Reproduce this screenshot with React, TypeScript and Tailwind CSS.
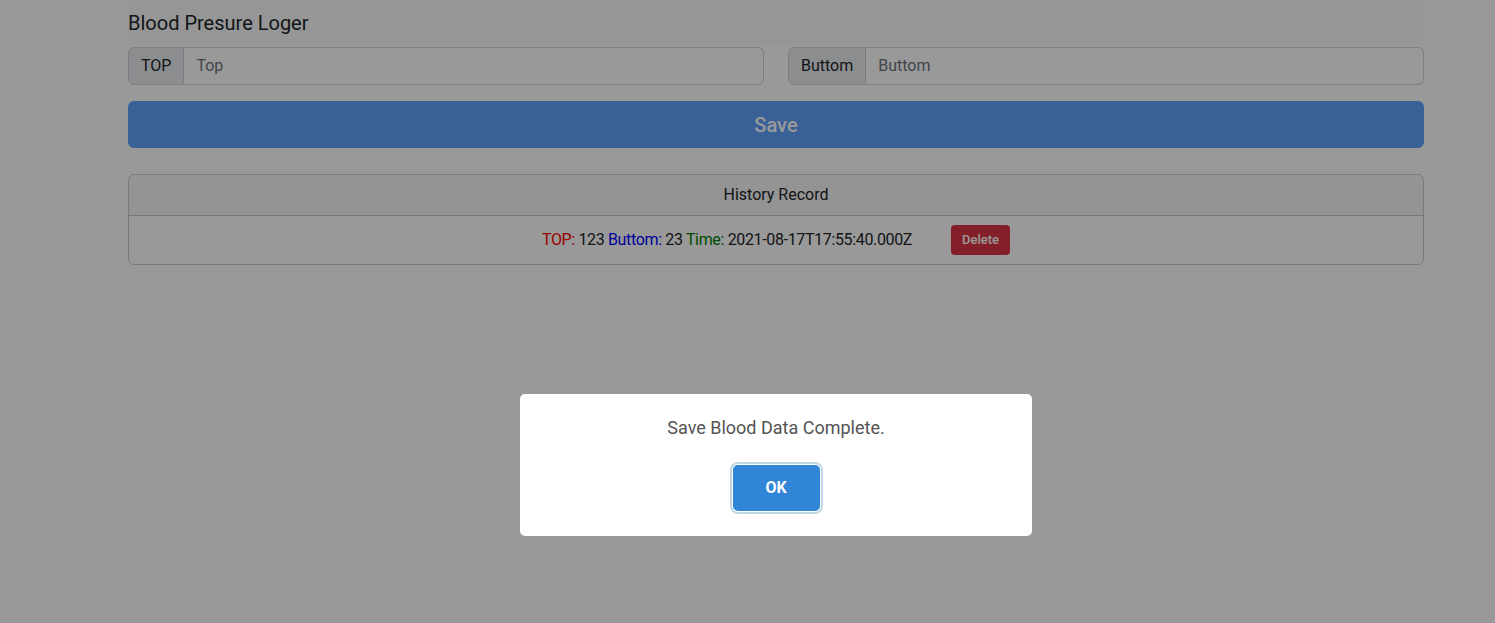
import React from "react";

type Entry = {
  top: number;
  bottom: number;
  time: string;
};

const records: Entry[] = [{ top: 123, bottom: 23, time: "2021-08-17T17:55:40.000Z" }];

const font = { fontFamily: "Roboto, 'Noto Sans', sans-serif" };

const InputGroup = ({ label, placeholder }: { label: string; placeholder: string }) => (
  <div className="flex h-[38px] w-full">
    <span className="flex items-center px-3 text-[16px] text-[#212529] bg-[#e9ecef] border border-[#ced4da] rounded-l-[6px]">
      {label}
    </span>
    <input
      className="flex-1 min-w-0 px-3 text-[16px] text-[#212529] placeholder:text-[#6c757d] bg-white border border-l-0 border-[#ced4da] rounded-r-[6px] outline-none"
      placeholder={placeholder}
    />
  </div>
);

export default function App() {
  return (
    <div className="relative min-h-[623px] bg-white" style={font}>
      <div className="ml-[128px] w-[1296px]">
        <div className="h-[44px] flex items-center bg-[#fbfbfb]">
          <h1 className="text-[20px] text-[#212529] leading-none mt-[1px]">Blood Presure Loger</h1>
        </div>

        <div className="grid grid-cols-2 gap-x-6 mt-[3px]">
          <InputGroup label="TOP" placeholder="Top" />
          <InputGroup label="Buttom" placeholder="Buttom" />
        </div>

        <button
          disabled
          className="mt-[16px] w-full h-[47px] rounded-[6px] bg-[#0d6efd] text-white text-[20px] font-medium opacity-65"
        >
          Save
        </button>

        <div className="mt-[26px] border border-black/20 rounded-[6px] overflow-hidden">
          <div className="h-[41px] flex items-center justify-center bg-black/[0.03] border-b border-black/20 text-[16px] text-[#212529]">
            History Record
          </div>
          {records.map((r, i) => (
            <div key={i} className="h-[48px] flex items-center justify-center gap-[39px] text-[16px] text-[#212529]">
              <span className="tracking-[-0.35px]">
                <span className="text-[#ff0000]">TOP:</span> {r.top}{" "}
                <span className="text-[#0000ff]">Buttom:</span> {r.bottom}{" "}
                <span className="text-[#008000]">Time:</span> {r.time}
              </span>
              <button className="h-[30px] px-[11px] rounded-[4px] bg-[#dc3545] text-white text-[13px] font-medium">
                Delete
              </button>
            </div>
          ))}
        </div>
      </div>

      <div className="fixed inset-0 bg-black/40">
        <div className="ml-[520px] mt-[394px] w-[512px] h-[142px] bg-white rounded-[5px] flex flex-col items-center">
          <p className="mt-[22px] text-[18px] leading-[24px] text-[#545454]">Save Blood Data Complete.</p>
          <button className="mt-[25px] w-[87px] h-[46px] rounded-[5px] bg-[#3085d6] text-white text-[16px] font-bold shadow-[0_0_0_1px_#fff,0_0_0_3px_rgba(43,114,165,0.29)]">
            OK
          </button>
        </div>
      </div>
    </div>
  );
}
